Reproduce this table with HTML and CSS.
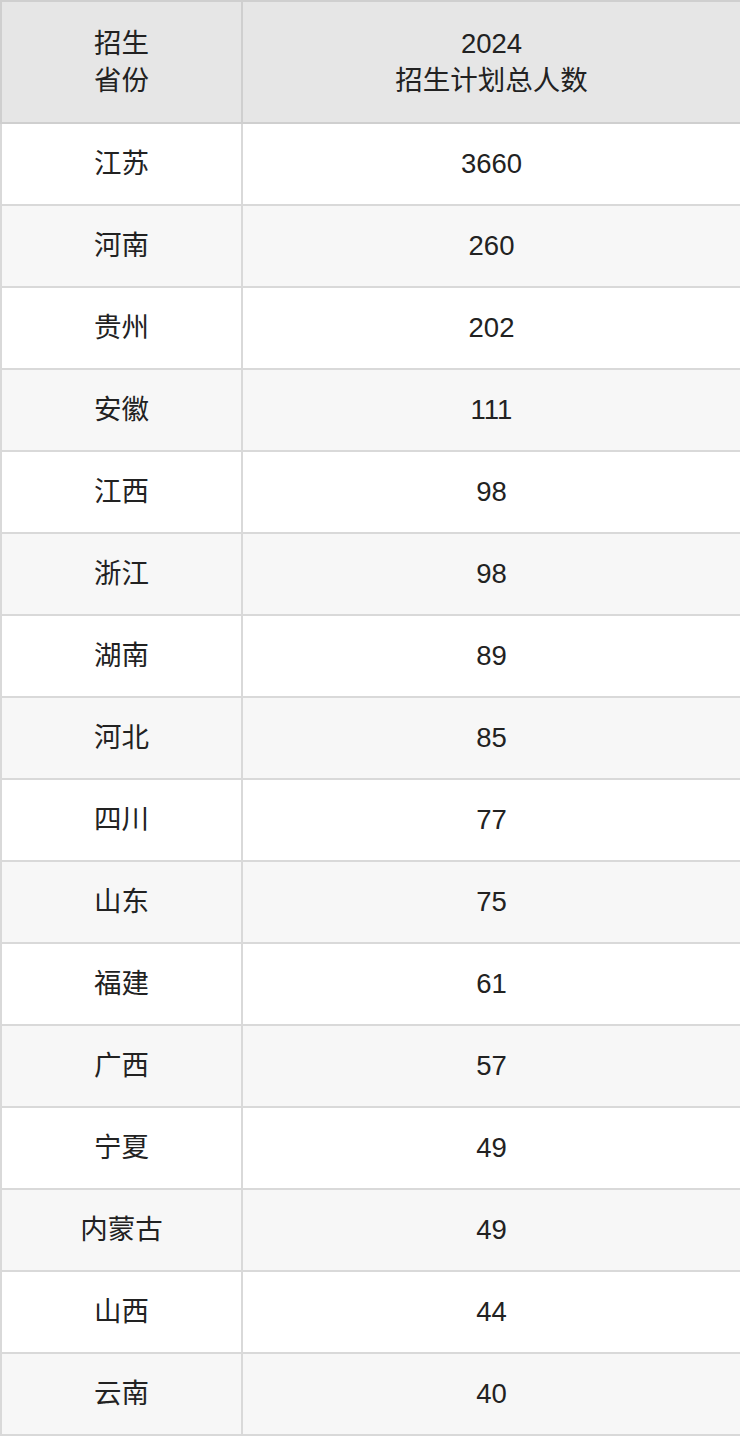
FILE: index.html
```html
<!DOCTYPE html>
<html lang="zh-CN">
<head>
<meta charset="utf-8">
<link rel="stylesheet" href="styles.css">
</head>
<body>
<table class="plan">
  <colgroup><col class="c1"><col class="c2"></colgroup>
  <thead>
    <tr><th>招生<br>省份</th><th>2024<br>招生计划总人数</th></tr>
  </thead>
  <tbody>
    <tr><td>江苏</td><td>3660</td></tr>
    <tr><td>河南</td><td>260</td></tr>
    <tr><td>贵州</td><td>202</td></tr>
    <tr><td>安徽</td><td>111</td></tr>
    <tr><td>江西</td><td>98</td></tr>
    <tr><td>浙江</td><td>98</td></tr>
    <tr><td>湖南</td><td>89</td></tr>
    <tr><td>河北</td><td>85</td></tr>
    <tr><td>四川</td><td>77</td></tr>
    <tr><td>山东</td><td>75</td></tr>
    <tr><td>福建</td><td>61</td></tr>
    <tr><td>广西</td><td>57</td></tr>
    <tr><td>宁夏</td><td>49</td></tr>
    <tr><td>内蒙古</td><td>49</td></tr>
    <tr><td>山西</td><td>44</td></tr>
    <tr><td>云南</td><td>40</td></tr>
  </tbody>
</table>
</body>
</html>
```

FILE: styles.css
```css
html, body {
  margin: 0;
  padding: 0;
  background: #ffffff;
}
.plan {
  width: 740px;
  table-layout: fixed;
  border-collapse: collapse;
  font-family: "Liberation Sans", "Noto Sans CJK SC", sans-serif;
  font-size: 27.5px;
  color: #222222;
}
.c1 { width: 241px; }
.c2 { width: 499px; }
.plan th, .plan td {
  border: 2px solid #d9d9d9;
  text-align: center;
  vertical-align: middle;
  padding: 0;
}
.plan th {
  background: #e6e6e6;
  font-weight: normal;
  height: 120px;
  line-height: 37px;
  border-color: #cfcfcf;
}
.plan td {
  height: 80px;
  line-height: 30px;
}
.plan tbody tr:nth-child(even) td {
  background: #f7f7f7;
}
```
